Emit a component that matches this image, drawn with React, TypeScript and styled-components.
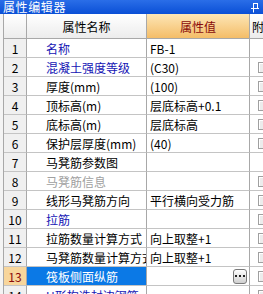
import React from "react";
import styled, { createGlobalStyle } from "styled-components";

const Global = createGlobalStyle`
  *, *::before, *::after { box-sizing: border-box; }
  html, body { margin: 0; padding: 0; overflow: hidden; background: #fff; }
  body { font-family: "Noto Sans CJK SC", "Noto Sans", sans-serif; }
`;

const Panel = styled.div`
  width: 263px;
  height: 294px;
  overflow: hidden;
  background: #f4f4f4;
  display: flex;
  flex-direction: column;
`;

const TitleBar = styled.div`
  height: 14px;
  flex: 0 0 14px;
  background: linear-gradient(#2a6ee8, #0a4fd6);
  color: #fff;
  font-size: 12px;
  line-height: 14px;
  letter-spacing: 0.6px;
  padding-left: 3px;
  display: flex;
  align-items: center;
  justify-content: space-between;
  overflow: hidden;
`;

const PinWrap = styled.span`
  display: flex;
  width: 12px;
  margin-right: 1px;
`;

const Table = styled.div`
  margin-left: 3px;
  border-left: 1px solid #a8a8a8;
  display: grid;
  grid-template-columns: 23px 120px 103px 14px;
  grid-template-rows: 25px;
  grid-auto-rows: 19px;
  background: #fff;
  font-size: 12px;
`;

const HeadCell = styled.div<{ $accent?: boolean; $edge?: boolean }>`
  border-right: ${(p) => (p.$edge ? "none" : "1px solid #a8a8a8")};
  border-bottom: 1px solid #a8a8a8;
  background: ${(p) =>
    p.$accent
      ? "linear-gradient(#fde6b6, #f4bd68)"
      : "linear-gradient(#ffffff, #ececec)"};
  color: ${(p) => (p.$accent ? "#8a0a0a" : "#000")};
  font-size: 12px;
  display: flex;
  align-items: center;
  justify-content: ${(p) => (p.$edge ? "flex-start" : "center")};
  padding-left: ${(p) => (p.$edge ? "2px" : "0")};
  white-space: nowrap;
  overflow: hidden;
`;

const NumCell = styled.div<{ $sel?: boolean }>`
  border-right: 1px solid #a8a8a8;
  border-bottom: 1px solid #c4c4c4;
  background: ${(p) => (p.$sel ? "#f8d69c" : "#f0f0f0")};
  color: ${(p) => (p.$sel ? "#8a0a0a" : "#000")};
  display: flex;
  align-items: center;
  justify-content: center;
  font-size: 12px;
`;

const NameCell = styled.div<{ $tone: string; $sel?: boolean }>`
  border-right: 1px solid #a8a8a8;
  border-bottom: 1px solid #c4c4c4;
  background: ${(p) => (p.$sel ? "#0b79e6" : "#fff")};
  color: ${(p) => (p.$sel ? "#fff" : p.$tone)};
  padding-left: 19px;
  display: flex;
  align-items: center;
  white-space: nowrap;
  overflow: hidden;
`;

const ValueCell = styled.div`
  border-right: 1px solid #a8a8a8;
  border-bottom: 1px solid #c4c4c4;
  padding-left: 3px;
  padding-right: 2px;
  display: flex;
  align-items: center;
  justify-content: space-between;
  white-space: nowrap;
  overflow: hidden;
  color: #000;
`;

const ExtraCell = styled.div`
  border-bottom: 1px solid #c4c4c4;
  display: flex;
  align-items: center;
  padding-left: 8px;
  overflow: hidden;
`;

const Check = styled.span`
  flex: 0 0 11px;
  width: 11px;
  height: 11px;
  border: 1px solid #a0a0a0;
  background: #ececec;
  box-shadow: inset 1px 1px 0 #fff;
`;

const DotsButton = styled.span`
  width: 14px;
  height: 15px;
  border: 1px solid #7a7a7a;
  border-radius: 3px;
  background: linear-gradient(#ffffff, #d0d0d0);
  display: flex;
  align-items: center;
  justify-content: center;
`;

const BLUE = "#1414b4";
const GRAY = "#a0a0a0";
const BLACK = "#000";

type Row = { name: string; value: string; tone: string; check: boolean; sel?: boolean };

const rows: Row[] = [
  { name: "名称", value: "FB-1", tone: BLUE, check: false },
  { name: "混凝土强度等级", value: "(C30)", tone: BLUE, check: true },
  { name: "厚度(mm)", value: "(100)", tone: BLACK, check: true },
  { name: "顶标高(m)", value: "层底标高+0.1", tone: BLACK, check: true },
  { name: "底标高(m)", value: "层底标高", tone: BLACK, check: true },
  { name: "保护层厚度(mm)", value: "(40)", tone: BLACK, check: true },
  { name: "马凳筋参数图", value: "", tone: BLACK, check: false },
  { name: "马凳筋信息", value: "", tone: GRAY, check: true },
  { name: "线形马凳筋方向", value: "平行横向受力筋", tone: BLACK, check: true },
  { name: "拉筋", value: "", tone: BLUE, check: true },
  { name: "拉筋数量计算方式", value: "向上取整+1", tone: BLACK, check: true },
  { name: "马凳筋数量计算方式", value: "向上取整+1", tone: BLACK, check: true },
  { name: "筏板侧面纵筋", value: "", tone: BLACK, check: true, sel: true },
  { name: "U形构造封边钢筋", value: "", tone: BLUE, check: true },
];

const Pin = () => (
  <PinWrap>
    <svg width="10" height="11" viewBox="0 0 10 11">
      <rect x="3.5" y="1.5" width="4" height="5" fill="none" stroke="#fff" strokeWidth="1" />
      <line x1="1" y1="6.5" x2="9" y2="6.5" stroke="#fff" strokeWidth="1" />
      <line x1="3.5" y1="1" x2="3.5" y2="10.5" stroke="#fff" strokeWidth="1" />
    </svg>
  </PinWrap>
);

const Dots = () => (
  <DotsButton>
    <svg width="10" height="4" viewBox="0 0 10 4">
      <rect x="0" y="1" width="2" height="2" fill="#222" />
      <rect x="4" y="1" width="2" height="2" fill="#222" />
      <rect x="8" y="1" width="2" height="2" fill="#222" />
    </svg>
  </DotsButton>
);

export default function App() {
  return (
    <>
      <Global />
      <Panel>
        <TitleBar>
          <span>属性编辑器</span>
          <Pin />
        </TitleBar>
        <Table>
          <HeadCell />
          <HeadCell>属性名称</HeadCell>
          <HeadCell $accent>属性值</HeadCell>
          <HeadCell $edge>附加</HeadCell>
          {rows.map((r, i) => (
            <React.Fragment key={i}>
              <NumCell $sel={r.sel}>{i + 1}</NumCell>
              <NameCell $tone={r.tone} $sel={r.sel}>
                {r.name}
              </NameCell>
              <ValueCell>
                <span>{r.value}</span>
                {r.sel && <Dots />}
              </ValueCell>
              <ExtraCell>{r.check && <Check />}</ExtraCell>
            </React.Fragment>
          ))}
        </Table>
      </Panel>
    </>
  );
}
